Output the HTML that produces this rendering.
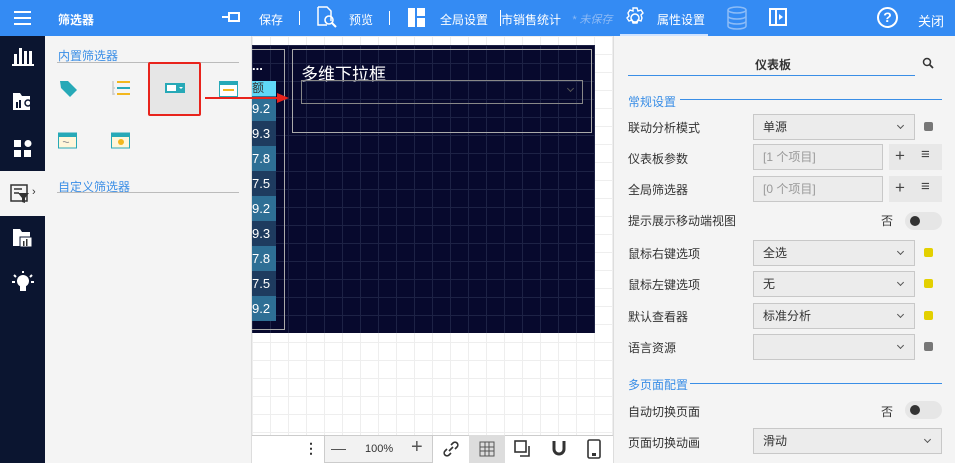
<!DOCTYPE html>
<html><head><meta charset="utf-8"><style>
*{margin:0;padding:0;box-sizing:border-box}
body{width:955px;height:463px;overflow:hidden;position:relative;background:#fff;font-family:"Liberation Sans","Noto Sans CJK SC",sans-serif;font-size:12px;color:#333}
.a{position:absolute}
.hdr{left:0;top:0;width:955px;height:36px;background:#348bf3}
.w{color:#fff}
.nav{left:0;top:36px;width:45px;height:427px;background:#0b1530}
.lp{left:45px;top:36px;width:207px;height:427px;background:#f4f4f4;border-right:1px solid #ddd}
.canvas{left:252px;top:36px;width:361px;height:427px;background-color:#fff;background-image:linear-gradient(#eee 1px,transparent 1px),linear-gradient(90deg,#eee 1px,transparent 1px);background-size:18px 18px}
.dark{left:252px;top:45px;width:343px;height:288px;background-color:#07092d;background-image:linear-gradient(#1d2245 1px,transparent 1px),linear-gradient(90deg,#1d2245 1px,transparent 1px);background-size:18px 18px}
.cell{left:252px;width:24px;height:25px;color:#fff;font-size:13px;line-height:25px}
.rp{left:613px;top:36px;width:342px;height:427px;background:#f4f4f4;border-left:1px solid #ddd}
.lbl{left:628px;font-size:12px;color:#333}
.sel{left:753px;width:162px;height:26px;background:#ececec;border:1px solid #c8c8c8;padding-left:9px;line-height:24px;font-size:12px}
.sel:after{content:"";position:absolute;right:11px;top:8px;width:4px;height:4px;border-right:1.3px solid #555;border-bottom:1.3px solid #555;transform:rotate(45deg)}
.inp{left:753px;width:130px;height:26px;background:#ececec;border:1px solid #c8c8c8;padding-left:9px;line-height:24px;color:#999}
.btns{left:889px;width:53px;height:26px;background:#e8e8e8;font-size:17px;line-height:24px;color:#444}
.sq{left:924px;width:9px;height:9px;border-radius:2px}
.tog{left:905px;width:37px;height:18px;border-radius:9px;background:#e6e6e6}
.tog:after{content:"";position:absolute;left:5px;top:4px;width:10px;height:10px;border-radius:50%;background:#333}
.sec{left:628px;color:#3a8ee6;font-size:12px}
.tb{top:435px;height:28px}
</style></head><body>
<div class="a hdr"></div>
<div class="a" style="left:14px;top:11px;width:17px;height:2px;background:#fff;box-shadow:0 6px 0 #fff,0 12px 0 #fff"></div>
<div class="a w" style="left:58px;top:11px;font-weight:bold">筛选器</div>
<svg class="a" style="left:221px;top:9px" width="20" height="16"><path d="M1 8h7M8 3v10M8 4h10v8H8" stroke="#fff" stroke-width="2" fill="none"/></svg>
<div class="a w" style="left:259px;top:11px">保存</div>
<div class="a" style="left:299px;top:11px;width:1px;height:14px;background:#fff"></div>
<svg class="a" style="left:316px;top:6px" width="22" height="22"><path d="M2 1h9l4 4v10M2 1v18h9" stroke="#fff" stroke-width="1.5" fill="none"/><circle cx="13" cy="14" r="4" stroke="#fff" stroke-width="1.6" fill="none"/><path d="M16 17l4 4" stroke="#fff" stroke-width="2"/></svg>
<div class="a w" style="left:349px;top:11px">预览</div>
<div class="a" style="left:389px;top:11px;width:1px;height:14px;background:#fff"></div>
<svg class="a" style="left:408px;top:8px" width="18" height="19"><rect x="0" y="0" width="7" height="19" fill="#fff"/><rect x="9" y="0" width="8" height="8" fill="#fff"/><rect x="9" y="10" width="8" height="9" fill="#fff"/></svg>
<div class="a w" style="left:440px;top:11px">全局设置</div>
<div class="a" style="left:500px;top:10px;width:1px;height:16px;background:#fff"></div>
<div class="a w" style="left:501px;top:11px">市销售统计</div>
<div class="a" style="left:572px;top:11px;color:#8dbaf5;font-style:italic;font-size:11px">* 未保存</div>

<svg class="a" style="left:624px;top:7px" width="22" height="22"><circle cx="11" cy="11" r="4" stroke="#fff" stroke-width="1.5" fill="none"/><path d="M9 1h4l1 3 3-1 2 3-2 2 1 3-1 3-3-1-1 3H9l-1-3-3 1-2-3 2-2-1-3 2-3 3 1z" stroke="#fff" stroke-width="1.4" fill="none"/></svg>
<div class="a w" style="left:657px;top:11px">属性设置</div>
<div class="a" style="left:620px;top:34px;width:88px;height:2px;background:#cfe3ff"></div>
<svg class="a" style="left:726px;top:6px" width="22" height="24"><ellipse cx="11" cy="4" rx="9" ry="3" stroke="#8cbcf7" stroke-width="1.5" fill="none"/><path d="M2 4v16c0 4 18 4 18 0V4M2 10c0 4 18 4 18 0M2 15c0 4 18 4 18 0" stroke="#8cbcf7" stroke-width="1.5" fill="none"/></svg>
<svg class="a" style="left:769px;top:8px" width="18" height="18"><rect x="1" y="1" width="16" height="16" stroke="#fff" stroke-width="2" fill="none"/><path d="M7 1v16" stroke="#fff" stroke-width="2"/><path d="M10 6l4 3-4 3z" fill="#fff"/></svg>
<div class="a" style="left:877px;top:7px;width:21px;height:21px;border:2px solid #fff;border-radius:50%;color:#fff;font-weight:bold;text-align:center;line-height:17px;font-size:14px">?</div>
<div class="a w" style="left:918px;top:11px;font-size:13px">关闭</div>

<div class="a nav"></div>
<svg class="a" style="left:12px;top:45px" width="22" height="22"><rect x="2" y="9" width="3" height="10" fill="#fff"/><rect x="7" y="3" width="3" height="16" fill="#fff"/><rect x="12" y="6" width="3" height="13" fill="#fff"/><rect x="17" y="6" width="3" height="13" fill="#fff"/><rect x="0" y="19" width="22" height="2" fill="#fff"/></svg>
<svg class="a" style="left:12px;top:92px" width="22" height="20"><path d="M1 1h7l2 3h8v14H1z" fill="#fff"/><rect x="4" y="10" width="2" height="6" fill="#0b1530"/><rect x="7" y="8" width="2" height="8" fill="#0b1530"/><circle cx="16" cy="11" r="3" stroke="#0b1530" stroke-width="1.5" fill="none"/></svg>
<svg class="a" style="left:14px;top:140px" width="18" height="18"><rect x="0" y="0" width="7" height="7" fill="#fff"/><circle cx="14" cy="3.5" r="3.5" fill="#fff"/><rect x="0" y="10" width="7" height="7" fill="#fff"/><rect x="10" y="10" width="7" height="7" fill="#fff"/></svg>
<div class="a" style="left:0;top:171px;width:45px;height:45px;background:#f4f4f4"></div>
<svg class="a" style="left:10px;top:184px" width="20" height="20"><rect x="1" y="1" width="16" height="16" stroke="#333" stroke-width="1.5" fill="none"/><path d="M4 5h8M4 9h5" stroke="#333" stroke-width="1.5"/><path d="M8 9h11l-4 5v5l-3-1v-4z" fill="#333"/></svg>
<div class="a" style="left:32px;top:186px;font-size:11px">›</div>
<svg class="a" style="left:12px;top:228px" width="22" height="20"><path d="M1 1h7l2 3h8v14H1z" fill="#fff"/><rect x="8" y="9" width="12" height="10" fill="#fff" stroke="#0b1530"/><rect x="11" y="13" width="1.5" height="5" fill="#333"/><rect x="14" y="11" width="1.5" height="7" fill="#333"/></svg>
<svg class="a" style="left:11px;top:270px" width="24" height="24"><circle cx="12" cy="11" r="6" fill="#fff"/><rect x="9" y="16" width="6" height="5" fill="#fff"/><path d="M12 1v2M3 5l2 2M21 5l-2 2M1 12h3M20 12h3" stroke="#fff" stroke-width="2"/></svg>

<div class="a canvas"></div>
<div class="a dark"></div>
<div class="a" style="left:252px;top:49px;width:33px;height:281px;border:1px solid #aaa;border-left:none"></div>
<div class="a w" style="left:252px;top:58px;font-size:13px;font-weight:bold">...</div>
<div class="a" style="left:252px;top:81px;width:24px;height:15px;background:#5fd8f8;font-size:12px;line-height:15px">额</div>
<div class="a cell" style="top:96px;background:#2e6f95">9.2</div>
<div class="a cell" style="top:121px;background:#1e3b5f">9.3</div>
<div class="a cell" style="top:146px;background:#2e6f95">7.8</div>
<div class="a cell" style="top:171px;background:#1e3b5f">7.5</div>
<div class="a cell" style="top:196px;background:#2e6f95">9.2</div>
<div class="a cell" style="top:221px;background:#1e3b5f">9.3</div>
<div class="a cell" style="top:246px;background:#2e6f95">7.8</div>
<div class="a cell" style="top:271px;background:#1e3b5f">7.5</div>
<div class="a cell" style="top:296px;background:#2e6f95">9.2</div>
<div class="a" style="left:292px;top:49px;width:300px;height:84px;border:1px solid #aaa"></div>
<div class="a w" style="left:301px;top:60px;font-size:17px">多维下拉框</div>
<div class="a" style="left:301px;top:80px;width:282px;height:24px;border:1px solid #888"></div>
<div class="a" style="left:568px;top:86px;width:5px;height:5px;border-right:1px solid #555;border-bottom:1px solid #555;transform:rotate(45deg)"></div>

<div class="a lp"></div>
<div class="a" style="left:58px;top:47px;color:#3a8ee6">内置筛选器</div>
<div class="a" style="left:57px;top:62px;width:182px;height:1px;background:#bbb"></div>
<svg class="a" style="left:58px;top:79px" width="20" height="20"><path d="M2 2h8l9 9-7 7-9-9z" fill="#27a9b7"/></svg>
<svg class="a" style="left:111px;top:80px" width="20" height="16"><path d="M2 1v14M2 8h2M2 14h2" stroke="#ccc" stroke-width="1.5"/><rect x="6" y="1" width="13" height="2" fill="#f2b71e"/><rect x="6" y="7" width="13" height="2" fill="#27a9b7"/><rect x="6" y="13" width="13" height="2" fill="#f2b71e"/></svg>
<div class="a" style="left:148px;top:62px;width:53px;height:54px;border:2px solid #e8231c;border-radius:2px;background:#e6e6e6"></div>
<svg class="a" style="left:165px;top:83px" width="20" height="10"><rect x="0" y="0" width="20" height="10" fill="#27a9b7"/><rect x="2" y="2" width="9" height="6" fill="#fff"/><path d="M14 4h4l-2 2z" fill="#fff"/></svg>
<svg class="a" style="left:219px;top:81px" width="20" height="16"><rect x="0.5" y="0.5" width="18" height="15" fill="#fff" stroke="#27a9b7"/><rect x="0" y="0" width="19" height="4" fill="#27a9b7"/><path d="M4 9h11" stroke="#f2b71e" stroke-width="2"/></svg>
<svg class="a" style="left:58px;top:131px" width="20" height="18"><rect x="0.5" y="2" width="18" height="15" fill="#fff6da" stroke="#27a9b7"/><rect x="0" y="2" width="19" height="4" fill="#27a9b7"/><path d="M5 11c2-2 3 2 6 0" stroke="#999" fill="none"/></svg>
<svg class="a" style="left:111px;top:131px" width="20" height="18"><rect x="0.5" y="2" width="18" height="15" fill="#fff6da" stroke="#27a9b7"/><rect x="0" y="2" width="19" height="4" fill="#27a9b7"/><circle cx="10" cy="11" r="3" fill="#f2b71e"/></svg>
<div class="a" style="left:58px;top:178px;color:#3a8ee6">自定义筛选器</div>
<div class="a" style="left:57px;top:192px;width:182px;height:1px;background:#bbb"></div>
<svg class="a" style="left:205px;top:90px" width="86" height="14"><path d="M0 8h74" stroke="#e8231c" stroke-width="2"/><path d="M72 3l12 5-12 5z" fill="#e8231c"/></svg>

<div class="a tb" style="left:252px;width:361px;background:#fff;border-top:1px solid #ccc"></div>
<div class="a" style="left:304px;top:440px;font-size:14px;font-weight:bold">⋮</div>
<div class="a tb" style="left:324px;width:109px;background:#f2f2f2;border:1px solid #ccc"></div>
<div class="a" style="left:331px;top:449px;width:15px;height:1px;background:#555"></div>
<div class="a" style="left:365px;top:443px;font-size:11px">100%</div>
<div class="a" style="left:411px;top:436px;font-size:20px;color:#555">+</div>
<svg class="a" style="left:442px;top:440px" width="18" height="18"><path d="M7 11l4-4M5 9l-2 2a2.5 2.5 0 0 0 4 4l2-2M13 9l2-2a2.5 2.5 0 0 0-4-4l-2 2" stroke="#333" stroke-width="1.6" fill="none"/></svg>
<div class="a tb" style="left:469px;width:36px;background:#ddd"></div>
<svg class="a" style="left:479px;top:441px" width="16" height="16"><path d="M1 1h14v14H1zM1 6h14M1 10h14M6 1v14M10 1v14" stroke="#555" fill="none"/></svg>
<svg class="a" style="left:514px;top:440px" width="18" height="18"><rect x="1" y="1" width="11" height="11" stroke="#333" stroke-width="1.6" fill="none"/><path d="M15 6v10H6" stroke="#333" stroke-width="1.6" fill="none"/></svg>
<svg class="a" style="left:551px;top:440px" width="16" height="17"><path d="M3 1v8a5 5 0 0 0 10 0V1" stroke="#333" stroke-width="3" fill="none"/></svg>
<svg class="a" style="left:587px;top:439px" width="14" height="20"><rect x="1" y="1" width="12" height="18" rx="1.5" stroke="#333" stroke-width="1.6" fill="none"/><rect x="5" y="14" width="4" height="3" fill="#333"/></svg>

<div class="a rp"></div>
<div class="a" style="left:755px;top:56px;font-weight:bold">仪表板</div>
<div class="a" style="left:628px;top:75px;width:287px;height:1px;background:#3a8ee6"></div>
<svg class="a" style="left:922px;top:57px" width="12" height="12"><circle cx="5" cy="5" r="3.5" stroke="#333" stroke-width="1.5" fill="none"/><path d="M7.5 7.5l3.5 3.5" stroke="#333" stroke-width="1.8"/></svg>
<div class="a sec" style="top:93px">常规设置</div>
<div class="a" style="left:680px;top:99px;width:262px;height:1px;background:#3a8ee6"></div>
<div class="a lbl" style="top:119px">联动分析模式</div>
<div class="a sel" style="top:114px">单源</div>
<div class="a sq" style="top:122px;background:#777"></div>
<div class="a lbl" style="top:150px">仪表板参数</div>
<div class="a inp" style="top:144px">[1 个项目]</div>
<div class="a btns" style="top:144px"><span style="position:absolute;left:6px">+</span><span style="position:absolute;left:32px;top:-1px;font-size:15px">≡</span></div>
<div class="a lbl" style="top:181px">全局筛选器</div>
<div class="a inp" style="top:176px">[0 个项目]</div>
<div class="a btns" style="top:176px"><span style="position:absolute;left:6px">+</span><span style="position:absolute;left:32px;top:-1px;font-size:15px">≡</span></div>
<div class="a lbl" style="top:212px">提示展示移动端视图</div>
<div class="a" style="left:881px;top:212px">否</div>
<div class="a tog" style="top:212px"></div>
<div class="a lbl" style="top:245px">鼠标右键选项</div>
<div class="a sel" style="top:240px">全选</div>
<div class="a sq" style="top:248px;background:#e3d000"></div>
<div class="a lbl" style="top:276px">鼠标左键选项</div>
<div class="a sel" style="top:271px">无</div>
<div class="a sq" style="top:279px;background:#e3d000"></div>
<div class="a lbl" style="top:308px">默认查看器</div>
<div class="a sel" style="top:303px">标准分析</div>
<div class="a sq" style="top:311px;background:#e3d000"></div>
<div class="a lbl" style="top:339px">语言资源</div>
<div class="a sel" style="top:334px"></div>
<div class="a sq" style="top:342px;background:#777"></div>
<div class="a sec" style="top:376px">多页面配置</div>
<div class="a" style="left:690px;top:383px;width:252px;height:1px;background:#3a8ee6"></div>
<div class="a lbl" style="top:403px">自动切换页面</div>
<div class="a" style="left:881px;top:403px">否</div>
<div class="a tog" style="top:401px"></div>
<div class="a lbl" style="top:434px">页面切换动画</div>
<div class="a sel" style="top:428px;width:189px">滑动</div>
</body></html>
